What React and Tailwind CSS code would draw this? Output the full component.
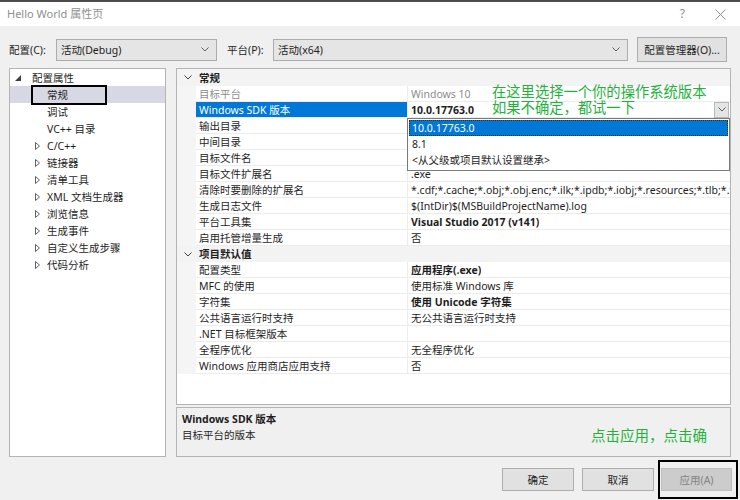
import React from 'react';

// ─── Data ─────────────────────────────────────────────────────────────────────
const TREE = [
  { label: '常规', leaf: true, current: true },
  { label: '调试', leaf: true },
  { label: 'VC++ 目录', leaf: true },
  { label: 'C/C++' },
  { label: '链接器' },
  { label: '清单工具' },
  { label: 'XML 文档生成器' },
  { label: '浏览信息' },
  { label: '生成事件' },
  { label: '自定义生成步骤' },
  { label: '代码分析' },
];

// values of the three rows under the open list are hidden by it
const GENERAL = [
  { label: '目标平台', value: 'Windows 10', dim: true },
  { label: 'Windows SDK 版本', value: '10.0.17763.0', bold: true, selected: true },
  { label: '输出目录', value: '' },
  { label: '中间目录', value: '' },
  { label: '目标文件名', value: '' },
  { label: '目标文件扩展名', value: '.exe' },
  { label: '清除时要删除的扩展名', value: '*.cdf;*.cache;*.obj;*.obj.enc;*.ilk;*.ipdb;*.iobj;*.resources;*.tlb;*.tli;*.t' },
  { label: '生成日志文件', value: '$(IntDir)$(MSBuildProjectName).log' },
  { label: '平台工具集', value: 'Visual Studio 2017 (v141)', bold: true },
  { label: '启用托管增量生成', value: '否' },
];

const DEFAULTS = [
  { label: '配置类型', value: '应用程序(.exe)', bold: true },
  { label: 'MFC 的使用', value: '使用标准 Windows 库' },
  { label: '字符集', value: '使用 Unicode 字符集', bold: true },
  { label: '公共语言运行时支持', value: '无公共语言运行时支持' },
  { label: '.NET 目标框架版本', value: '' },
  { label: '全程序优化', value: '无全程序优化' },
  { label: 'Windows 应用商店应用支持', value: '否' },
];

// ─── Small glyphs ─────────────────────────────────────────────────────────────
const Chevron = ({ color = '#606060' }) => (
  <svg width="8" height="5" viewBox="0 0 8 5" className="block">
    <path d="M0.5 0.5 L4 4 L7.5 0.5" fill="none" stroke={color} strokeWidth="1" />
  </svg>
);

const Expanded = () => (
  <svg width="6" height="6" viewBox="0 0 6 6" className="block">
    <polygon points="6,0 6,6 0,6" fill="#404040" />
  </svg>
);

const Collapsed = () => (
  <svg width="5" height="8" viewBox="0 0 5 8" className="block">
    <polygon points="0.5,0.5 4.5,4 0.5,7.5" fill="none" stroke="#606060" strokeWidth="1" />
  </svg>
);

const Combo = ({ value, width }) => (
  <div className={`${width} h-[22px] bg-[#e5e5e5] border border-[#acacac] flex items-center justify-between pl-[4px] pr-[7px]`}>
    <span>{value}</span>
    <Chevron />
  </div>
);

// ─── Property grid pieces ─────────────────────────────────────────────────────
const Header = ({ label, tall }) => (
  <div className={`${tall ? 'h-[17px]' : 'h-[16px]'} flex items-center bg-[#f3f3f3]`}>
    <div className="w-[20px] flex justify-center pl-[1px]">
      <Chevron color="#404040" />
    </div>
    <span className="pl-[2px] font-bold text-[#1e1e1e]">{label}</span>
  </div>
);

const Row = ({ label, value, dim, bold, selected }) => (
  <div className="h-[16px] flex">
    <div className="w-[19px] bg-[#f5f5f5] shrink-0" />
    <div
      className={`w-[212px] shrink-0 pl-[3px] border-b border-r border-[#ececec] whitespace-nowrap overflow-hidden ${
        selected ? 'bg-[#0078d7] text-white' : dim ? 'text-[#8c8c8c]' : 'text-[#1e1e1e]'
      }`}
    >
      {label}
    </div>
    <div className="flex-1 min-w-0 pl-[3px] border-b border-[#ececec] flex items-center justify-between">
      <span className={`whitespace-nowrap overflow-hidden ${bold ? 'font-bold' : ''} ${dim ? 'text-[#8c8c8c]' : 'text-[#1e1e1e]'}`}>
        {value}
      </span>
      {selected && (
        <div className="w-[15px] h-[16px] shrink-0 mr-[1px] bg-[#e5e5e5] border border-[#b9b9b9] flex items-center justify-center">
          <Chevron />
        </div>
      )}
    </div>
  </div>
);

// ─── App ──────────────────────────────────────────────────────────────────────
export default function App() {
  return (
    <div className="w-[740px] h-[500px] overflow-hidden bg-[#f0f0f0] text-[10.5px] leading-[16px] text-[#1e1e1e] font-['Noto_Sans','Noto_Sans_CJK_SC',sans-serif]">
      {/* ── Title bar ─────────────────────────────────────────────── */}
      <div className="h-[2px] bg-[#4b4b4b]" />
      <div className="h-[24px] bg-white flex items-center justify-between pl-[7px] pr-[14px]">
        <span className="text-[11px] text-[#8f8f8f]">Hello World 属性页</span>
        <div className="flex items-center gap-[30px] text-[#8f8f8f]">
          <span className="text-[12px]">?</span>
          <svg width="11" height="11" viewBox="0 0 11 11">
            <path d="M0.5 0.5 L10.5 10.5 M10.5 0.5 L0.5 10.5" stroke="#8f8f8f" strokeWidth="1" />
          </svg>
        </div>
      </div>

      {/* ── Configuration row ─────────────────────────────────────── */}
      <div className="mt-[11px] h-[25px] flex items-center pl-[9px]">
        <span className="w-[47px]">配置(C):</span>
        <Combo value="活动(Debug)" width="w-[161px]" />
        <span className="ml-[10px] w-[46px]">平台(P):</span>
        <Combo value="活动(x64)" width="w-[355px]" />
        <div className="ml-[9px] w-[90px] h-[25px] bg-[#e1e1e1] border border-[#adadad] flex items-center justify-center">
          配置管理器(O)...
        </div>
      </div>

      {/* ── Main area ─────────────────────────────────────────────── */}
      <div className="mt-[6px] h-[389px] flex pl-[9px]">
        {/* Tree */}
        <div className="w-[157px] h-full bg-white border border-[#b4b4b4]">
          <div className="h-[17px] flex items-center pl-[5px]">
            <div className="w-[17px]"><Expanded /></div>
            <span>配置属性</span>
          </div>
          {TREE.map(({ label, leaf, current }) => (
            <div key={label} className={`h-[17px] flex items-center ${current ? 'bg-[#d8d8e4]' : ''}`}>
              <div className="w-[37px] pl-[25px] shrink-0">{!leaf && <Collapsed />}</div>
              <span className="relative">
                {label}
                {current && (
                  <span className="absolute left-[-16px] top-[-2px] w-[76px] h-[20px] border-2 border-black" />
                )}
              </span>
            </div>
          ))}
        </div>

        {/* Right column */}
        <div className="ml-[10px] w-[555px] flex flex-col">
          <div className="relative h-[337px] bg-white border border-[#b4b4b4] overflow-hidden">
            <Header label="常规" tall />
            {GENERAL.map((r) => <Row key={r.label} {...r} />)}
            <Header label="项目默认值" />
            {DEFAULTS.map((r) => <Row key={r.label} {...r} />)}

            {/* Dropdown list of the SDK row */}
            <div className="absolute left-[230px] top-[49px] w-[323px] h-[53px] bg-white border border-[#7a7a7a] p-[1px]">
              <div className="h-[16px] pl-[2px] bg-[#0078d7] text-white border border-dotted border-[#3a2a10] leading-[14px]">
                10.0.17763.0
              </div>
              <div className="h-[16px] pl-[3px]">8.1</div>
              <div className="h-[16px] pl-[3px]">&lt;从父级或项目默认设置继承&gt;</div>
            </div>

            {/* Annotation */}
            <div className="absolute left-[315px] top-[14px] text-[14.3px] leading-[16px] text-[#22b23a] font-['Noto_Sans_CJK_SC',sans-serif]">
              <div>在这里选择一个你的操作系统版本</div>
              <div>如果不确定，都试一下</div>
            </div>
          </div>

          {/* Description */}
          <div className="relative mt-[2px] h-[50px] border border-[#b4b4b4] bg-[#f0f0f0] pl-[5px] pt-[3px]">
            <div className="font-bold">Windows SDK 版本</div>
            <div>目标平台的版本</div>
            <span className="absolute left-[414px] top-[19px] text-[14.5px] leading-[16px] text-[#22b23a] font-['Noto_Sans_CJK_SC',sans-serif]">
              点击应用，点击确
            </span>
          </div>
        </div>
      </div>

      {/* ── Buttons ───────────────────────────────────────────────── */}
      <div className="mt-[3px] flex justify-end items-start pr-[2px]">
        <div className="mt-[8px] w-[72px] h-[23px] bg-[#e1e1e1] border border-[#adadad] flex items-center justify-center">确定</div>
        <div className="mt-[8px] ml-[8px] w-[72px] h-[23px] bg-[#e1e1e1] border border-[#adadad] flex items-center justify-center">取消</div>
        <div className="ml-[4px] w-[80px] h-[39px] border-2 border-black pt-[6px] pl-[1px]">
          <div className="w-[71px] h-[23px] bg-[#cccccc] border border-[#bfbfbf] flex items-center justify-center text-[#838383]">
            应用(A)
          </div>
        </div>
      </div>
    </div>
  );
}
